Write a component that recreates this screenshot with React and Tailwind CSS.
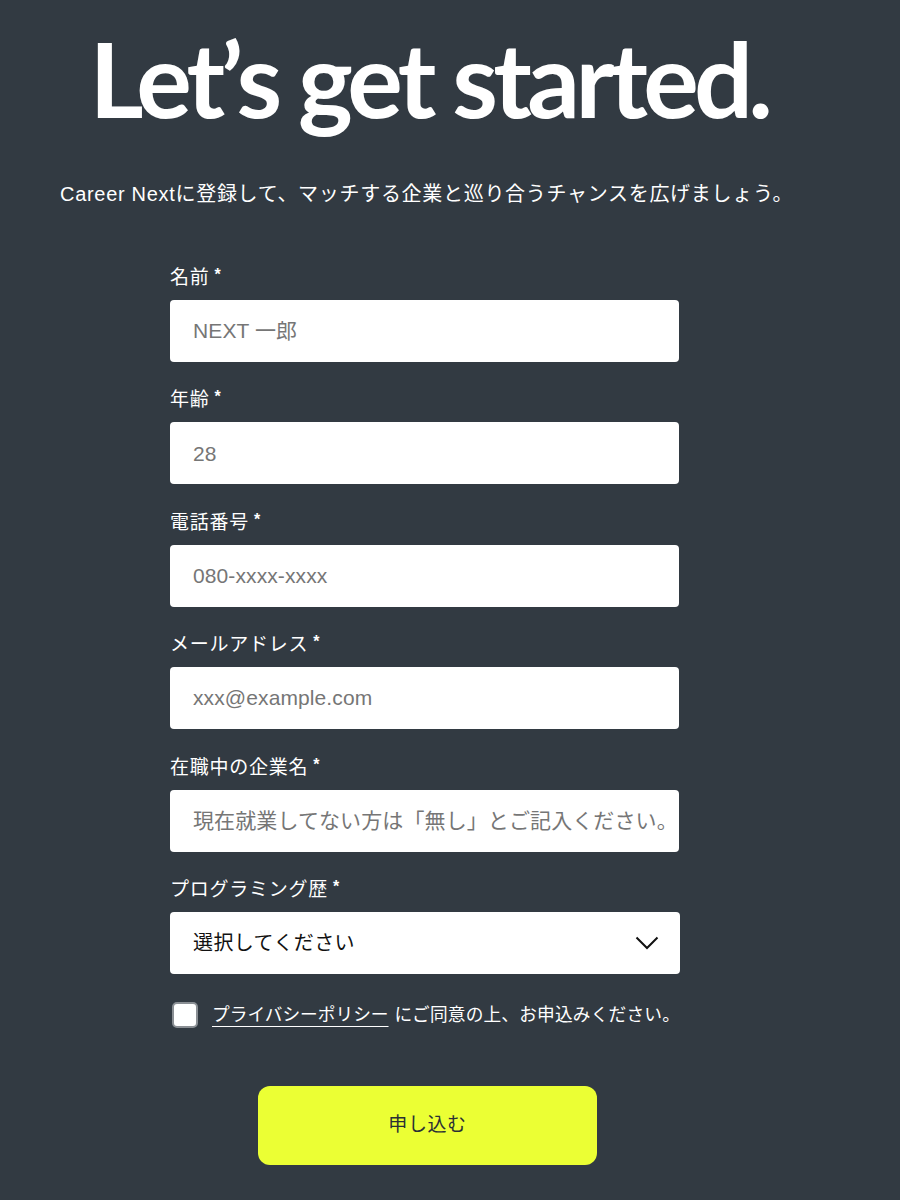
import React from "react";

const jp = { fontFamily: '"Liberation Sans", "Noto Sans CJK JP", sans-serif' };

function Label({ children }) {
  return (
    <div className="flex items-start text-[19px] leading-[24px] tracking-[0.04em] text-white" style={jp}>
      <span>{children}</span>
      <span className="ml-[5px] text-[16px] font-bold leading-[18px]">*</span>
    </div>
  );
}

function Field({ label, placeholder }) {
  return (
    <div className="flex flex-col gap-[10px]">
      <Label>{label}</Label>
      <div className="flex h-[62px] w-[509px] items-center overflow-hidden whitespace-nowrap rounded-[4px] bg-white pl-[23px] text-[21px] tracking-[0.005em] text-[#767676]" style={jp}>
        {placeholder}
      </div>
    </div>
  );
}

export default function App() {
  return (
    <div className="min-h-[1200px] w-full bg-[#323a42] pb-[36px]">
      <div className="flex justify-center pt-[18px]">
        <h1
          className="ml-[-42px] text-[104px] font-bold leading-[120px] tracking-[-0.045em] text-white"
          style={{ fontFamily: 'Lato, sans-serif' }}
        >
          Let’s get started.
        </h1>
      </div>
      <p className="mt-[42px] pl-[60px] text-[20px] leading-[28px] tracking-[0.035em] text-white" style={jp}>
        Career Nextに登録して、マッチする企業と巡り合うチャンスを広げましょう。
      </p>
      <div className="mt-[58px] flex flex-col gap-[26.4px] pl-[170px]">
        <Field label="名前" placeholder="NEXT 一郎" />
        <Field label="年齢" placeholder="28" />
        <Field label="電話番号" placeholder="080-xxxx-xxxx" />
        <Field label="メールアドレス" placeholder="xxx@example.com" />
        <Field label="在職中の企業名" placeholder="現在就業してない方は「無し」とご記入ください。" />
        <div className="flex flex-col gap-[10px]">
          <Label>プログラミング歴</Label>
          <div className="flex h-[62px] w-[510px] items-center justify-between rounded-[4px] bg-white pl-[23px] pr-[21px] text-[20px] tracking-[0.02em] text-[#111]" style={jp}>
            <span>選択してください</span>
            <svg width="24" height="14" viewBox="0 0 24 14" fill="none">
              <path d="M1.5 1.5 L12 12 L22.5 1.5" stroke="#111" strokeWidth="2" />
            </svg>
          </div>
        </div>
      </div>
      <div className="mt-[28px] flex items-center pl-[172px]" style={jp}>
        <div className="h-[26px] w-[26px] rounded-[5px] border-2 border-[#8a8f94] bg-white" />
        <span className="ml-[14px] text-[17.7px] text-white underline decoration-[1px] underline-offset-[5px]">
          プライバシーポリシー
        </span>
        <span className="ml-[6px] text-[17.7px] tracking-[0.01em] text-white">にご同意の上、お申込みください。</span>
      </div>
      <div className="mt-[57px] flex pl-[258px]">
        <button
          className="flex h-[79px] w-[339px] items-center justify-center rounded-[12px] bg-[#ebff34] text-[19px] tracking-[0.03em] text-[#2a2f35]"
          style={jp}
        >
          申し込む
        </button>
      </div>
    </div>
  );
}
